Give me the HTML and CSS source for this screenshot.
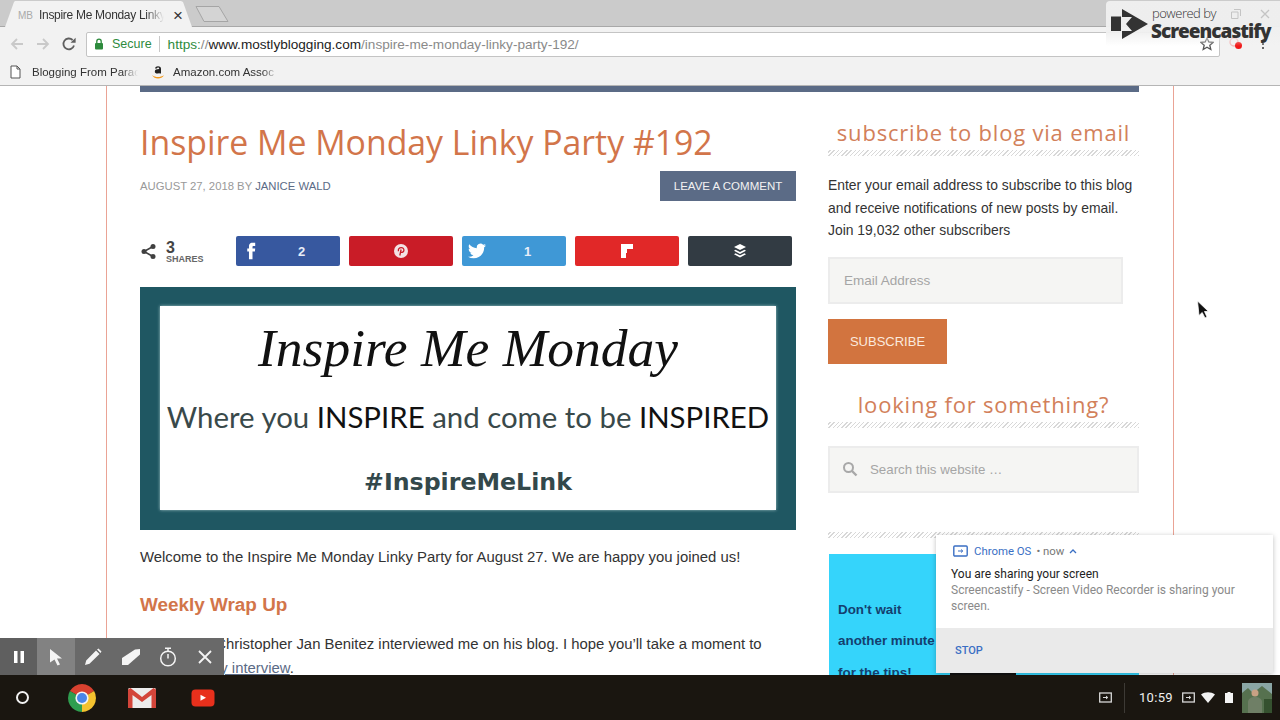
FILE: index.html
```html
<!DOCTYPE html>
<html lang="en">
<head>
    <meta charset="UTF-8">
    <title>Inspire Me Monday Linky Party #192</title>
    <link rel="stylesheet" href="styles.css">
</head>
<body>
    <div class="tabstrip">
        <div class="tab">
            <span class="favicon">MB</span>
            <span class="tabtitle">Inspire Me Monday Linky</span>
            <span class="tabclose">&#215;</span>
        </div>
        <svg class="newtab" width="34" height="18" viewBox="0 0 34 18"><path d="M1 1.5H24L33 16.5H9Z" fill="#d4d4d4" stroke="#a5a5a5"/></svg>
    </div>

    <div class="toolbar">
        <svg class="navicon" width="16" height="16" viewBox="0 0 16 16"><path d="M14 8H3M8 3L3 8l5 5" fill="none" stroke="#c9c9c9" stroke-width="1.8"/></svg>
        <svg class="navicon" width="16" height="16" viewBox="0 0 16 16"><path d="M2 8h11M8 3l5 5-5 5" fill="none" stroke="#c9c9c9" stroke-width="1.8"/></svg>
        <svg class="navicon" width="16" height="16" viewBox="0 0 16 16"><path d="M13 9.5A5.4 5.4 0 1 1 11.6 4" fill="none" stroke="#5f5f5f" stroke-width="1.8"/><path d="M9.5 6.8H14.6V1.7Z" fill="#5f5f5f"/></svg>
        <div class="omnibox">
            <svg width="10" height="12" viewBox="0 0 10 12"><rect x="1" y="5" width="8" height="6.5" rx="1" fill="#2e8b3d"/><path d="M2.8 5V3.4a2.2 2.2 0 0 1 4.4 0V5" fill="none" stroke="#2e8b3d" stroke-width="1.3"/></svg>
            <span class="secure">Secure</span>
            <span class="omnisep"></span>
            <span class="url"><span class="scheme">https:</span><span class="faint">//</span><span class="host">www.mostlyblogging.com</span><span class="faint">/inspire-me-monday-linky-party-192/</span></span>
            <svg class="star" width="14" height="14" viewBox="0 0 14 14"><path d="M7 1l1.8 4 4.2.4-3.2 2.8 1 4.3L7 10.2 3.2 12.5l1-4.3L1 5.4 5.2 5Z" fill="none" stroke="#555" stroke-width="1.3"/></svg>
        </div>
        <svg class="recdot" width="16" height="14" viewBox="0 0 16 14"><circle cx="6" cy="5" r="4" fill="none" stroke="#f3b7b7" stroke-width="1.5"/><circle cx="10.5" cy="8.5" r="3.5" fill="#f01818"/></svg>
        <span class="menudots"><i></i><i></i><i></i></span>
    </div>

    <div class="bookmarks">
        <span class="bookmark">
            <svg width="11" height="14" viewBox="0 0 11 14"><path d="M1 1h6l3 3v9H1Z" fill="#fff" stroke="#555"/><path d="M7 1v3h3" fill="none" stroke="#555"/></svg>
            <span class="bmtext">Blogging From Parac</span>
        </span>
        <span class="bookmark">
            <svg width="14" height="16" viewBox="0 0 14 16"><path d="M4 4.5c.3-1.500 1.500-2.200 3-2.200 2 0 3 .9 3 2.500v4.700H8.300V8.700c-.5.500-1.200.9-2 .9-1.500 0-2.500-.8-2.500-2.200 0-1.800 1.700-2.500 4.400-2.500 0-1-.4-1.400-1.200-1.400-.6 0-1 .3-1.200.9Z" fill="#222"/><path d="M1 11c3.500 2.700 8 2.700 12 .3-2.500 4.200-9.500 4.400-12-.3Z" fill="#f39a1d"/></svg>
            <span class="bmtext short">Amazon.com Assoc</span>
        </span>
    </div>

    <div class="page">
        <div class="wrap">
            <div class="topbar"></div>
            <div class="columns">
                <div class="main">
                    <h1>Inspire Me Monday Linky Party #192</h1>
                    <div class="meta">
                        <span class="byline">AUGUST 27, 2018 BY <a>JANICE WALD</a></span>
                        <span class="commentbtn">LEAVE A COMMENT</span>
                    </div>
                    <div class="shares">
                        <div class="sharecount">
                            <svg width="17" height="17" viewBox="0 0 17 17"><path d="M13 3.5L4 8.5l9 5" fill="none" stroke="#404040" stroke-width="1.6"/><circle cx="13" cy="3.5" r="2.5" fill="#404040"/><circle cx="4" cy="8.5" r="2.5" fill="#404040"/><circle cx="13" cy="13.5" r="2.5" fill="#404040"/></svg>
                            <div class="countbox"><b>3</b><span>SHARES</span></div>
                        </div>
                        <div class="sharebtn fb">
                            <svg width="18" height="18" viewBox="0 0 24 24"><path d="M14 8.5V6.300c0-.9.600-1.100 1-1.100h2.600V1H14C10.200 1 9.300 3.900 9.300 5.700v2.800H7v4.300h2.300V23H14V12.800h3.200l.4-4.300z" fill="#fff"/></svg>
                            <b>2</b>
                        </div>
                        <div class="sharebtn pin center">
                            <svg width="14" height="14" viewBox="0 0 14 14"><circle cx="7" cy="7" r="7" fill="#f3e3e4"/><path d="M5.800 11.500l1.300-6M4.500 7.300C3.800 5.200 5.300 3.600 7.200 3.600c1.800 0 2.900 1.100 2.700 2.800-.2 1.700-2 2.600-3.200 1.500" fill="none" stroke="#c91c27" stroke-width="1.3"/></svg>
                        </div>
                        <div class="sharebtn tw">
                            <svg width="18" height="18" viewBox="0 0 24 24"><path d="M23.950 4.570a10 10 0 0 1-2.820.77 4.960 4.960 0 0 0 2.160-2.720c-.95.550-2 .95-3.120 1.180a4.920 4.920 0 0 0-8.380 4.480C7.690 8.100 4.070 6.130 1.640 3.160a4.820 4.820 0 0 0-.67 2.480c0 1.710.87 3.210 2.190 4.100a4.900 4.900 0 0 1-2.230-.62v.06a4.920 4.920 0 0 0 3.950 4.830 5 5 0 0 1-2.210.08 4.940 4.940 0 0 0 4.600 3.420A9.870 9.870 0 0 1 0 19.540a14 14 0 0 0 7.560 2.210c9.050 0 14-7.500 14-13.980 0-.21 0-.42-.02-.63a9.940 9.940 0 0 0 2.460-2.550z" fill="#fff"/></svg>
                            <b>1</b>
                        </div>
                        <div class="sharebtn flip center">
                            <svg width="12" height="14" viewBox="0 0 12 14"><path d="M0 0H12V5H6V9H0Z M0 9H5V14H0Z" fill="#fff"/></svg>
                        </div>
                        <div class="sharebtn buf center">
                            <svg width="14" height="14" viewBox="0 0 14 14"><path d="M7 0l6 3-6 3-6-3Z" fill="#fff"/><path d="M2.500 5.700L7 8l4.500-2.300L13 6.800 7 10 1 6.800Z" fill="#fff"/><path d="M2.500 9.200L7 11.400l4.500-2.200L13 10.300 7 13.500 1 10.300Z" fill="#fff"/></svg>
                        </div>
                    </div>
                    <div class="banner">
                        <div class="bannerinner">
                            <div class="bannerscript">Inspire Me Monday</div>
                            <div class="bannerhand">Where you <b>INSPIRE</b> and come to be <b>INSPIRED</b></div>
                            <div class="bannertag">#InspireMeLink</div>
                        </div>
                    </div>
                    <p class="welcome">Welcome to the Inspire Me Monday Linky Party for August 27. We are happy you joined us!</p>
                    <h3>Weekly Wrap Up</h3>
                    <p class="entry">Last week, Christopher Jan Benitez interviewed me on his blog. I hope you&#8217;ll take a moment to check out <a>my interview</a>.</p>
                </div>

                <div class="sidebar">
                    <h4 class="widgettitle first">subscribe to blog via email</h4>
                    <p class="subtext">Enter your email address to subscribe to this blog and receive notifications of new posts by email.<br>Join 19,032 other subscribers</p>
                    <div class="field email">Email Address</div>
                    <div class="subscribe">SUBSCRIBE</div>
                    <h4 class="widgettitle">looking for something?</h4>
                    <div class="field search">
                        <svg width="16" height="16" viewBox="0 0 16 16"><circle cx="6.5" cy="6.5" r="4.5" fill="none" stroke="#a8a8a8" stroke-width="2"/><path d="M10 10l4.500 4.500" stroke="#a8a8a8" stroke-width="2.4"/></svg>
                        <span>Search this website &#8230;</span>
                    </div>
                    <div class="hatch lone"></div>
                    <div class="ad">
                        <p>Don't wait</p>
                        <p>another minute</p>
                        <p>for the tips!</p>
                        <span class="adblob"></span>
                    </div>
                </div>
            </div>
        </div>
    </div>

    <div class="shelf">
        <span class="launcher"></span>
        <svg class="app" width="30" height="30" viewBox="-15 -15 30 30"><path d="M0 0L-12.100-7A14 14 0 0 1 12.100-7Z" fill="#d8412f"/><path d="M0 0L12.100-7A14 14 0 0 1 0 14Z" fill="#f4c22f"/><path d="M0 0L0 14A14 14 0 0 1-12.100-7Z" fill="#2f9e4f"/><circle r="6.600" fill="#f4f4f4"/><circle r="5" fill="#4a86e8"/></svg>
        <svg class="app mail" width="30" height="22" viewBox="0 0 30 22"><rect x="1" y="1" width="28" height="20" rx="1.500" fill="#ececec"/><path d="M1 2.500V21H5.500V8L15 15 24.500 8V21H29V2.500L26.500 1 15 10 3.500 1Z" fill="#d3453a"/></svg>
        <svg class="app" width="24" height="18" viewBox="0 0 24 18"><rect width="23" height="17" x=".5" y=".5" rx="4" fill="#e8301c"/><path d="M9.500 5.700L15 8.800l-5.500 3Z" fill="#fff"/></svg>
        <div class="tray">
            <svg class="traycast" width="13" height="11" viewBox="0 0 13 11"><rect x=".7" y="1" width="11.600" height="9" fill="none" stroke="#d8d8d8" stroke-width="1.3"/><path d="M4 5.500h4.500M7 4l1.800 1.500L7 7" fill="none" stroke="#d8d8d8"/></svg>
            <span class="traysep"></span>
            <span class="clock">10:59</span>
            <svg class="traycast2" width="13" height="11" viewBox="0 0 13 11"><rect x=".7" y="1" width="11.600" height="9" fill="none" stroke="#d8d8d8" stroke-width="1.3"/><path d="M4 5.500h4.500M7 4l1.800 1.500L7 7" fill="none" stroke="#d8d8d8"/></svg>
            <svg class="traywifi" width="14" height="11" viewBox="0 0 14 11"><path d="M0 2.500C4 -.5 10 -.5 14 2.500L7 11Z" fill="#f2f2f2"/></svg>
            <svg class="traybatt" width="8" height="11" viewBox="0 0 8 11"><path d="M2.500 0h3v1H8v10H0V1h2.500Z" fill="#f4f4f4"/></svg>
            <svg class="avatar" width="30" height="30" viewBox="0 0 30 30"><rect width="30" height="30" fill="#5f7d5c"/><rect width="30" height="12" fill="#8aa6a4"/><path d="M0 10l6-5 5 5 9-7 10 8v19H0Z" fill="#56714f"/><circle cx="13" cy="10" r="3.500" fill="#c9a184"/><path d="M6 30V19c0-3 3-5 7-5s7 2 7 5v11Z" fill="#6f7f66"/><rect x="22" y="16" width="8" height="14" fill="#35512f"/></svg>
        </div>
    </div>

    <div class="recbar">
        <span class="recbtn dark"><svg width="12" height="14" viewBox="0 0 12 14"><path d="M1 1h3.500v12H1ZM7.500 1H11v12H7.500Z" fill="#fff"/></svg></span>
        <span class="recbtn active"><svg width="14" height="18" viewBox="0 0 14 18"><path d="M1 1l12 9.500H8l3 6-2.500 1-3-6L1 14.500Z" fill="#f4f4f4"/></svg></span>
        <span class="recbtn"><svg width="18" height="18" viewBox="0 0 18 18"><path d="M1 17l1.200-4.500L12 2.500 15.500 6 5.500 15.800Z M13 1.500l1.500-1L17.500 3.500 16.500 5Z" fill="#f4f4f4"/></svg></span>
        <span class="recbtn"><svg width="20" height="18" viewBox="0 0 20 18"><path d="M1 10L14 1.500 19 1V6.500L7 17H1Z" fill="#f4f4f4"/></svg></span>
        <span class="recbtn"><svg width="18" height="20" viewBox="0 0 18 20"><circle cx="9" cy="11.500" r="7.300" fill="none" stroke="#f4f4f4" stroke-width="1.5"/><path d="M6 1.200h6M9 1.500v3M9 7v4.500" stroke="#f4f4f4" stroke-width="1.5" fill="none"/></svg></span>
        <span class="recbtn"><svg width="14" height="14" viewBox="0 0 14 14"><path d="M1 1l12 12M13 1L1 13" stroke="#f4f4f4" stroke-width="1.8"/></svg></span>
    </div>

    <div class="notice">
        <div class="noticebody">
            <div class="noticehead">
                <svg width="15" height="12" viewBox="0 0 15 12"><rect x=".8" y="1" width="13.400" height="10" rx="1" fill="none" stroke="#3a6fc4" stroke-width="1.4"/><path d="M5 6h4.500M8 4.500L9.800 6 8 7.500" fill="none" stroke="#3a6fc4"/></svg>
                <span class="noticeapp">Chrome OS</span>
                <span class="noticetime">&#8226; now</span>
                <svg width="8" height="5" viewBox="0 0 8 5"><path d="M1 4l3-3 3 3" fill="none" stroke="#3a6fc4" stroke-width="1.3"/></svg>
            </div>
            <div class="noticetitle">You are sharing your screen</div>
            <div class="noticetext">Screencastify - Screen Video Recorder is sharing your screen.</div>
        </div>
        <div class="noticefoot">STOP</div>
    </div>

    <div class="watermark">
        <svg width="40" height="32" viewBox="0 0 40 32"><path d="M1 8.500H11V23H1ZM12 1L38 16 12 31V23H22L16 16 22 9H12Z" fill="#333"/></svg>
        <div class="wmtext">
            <span class="wmsmall">powered by</span>
            <span class="wmbig">Screencastify</span>
        </div>
        <div class="wmctrl">
            <svg width="10" height="10" viewBox="0 0 10 10"><path d="M3 .5h6.500V7M.5 3h6.500v6.500H.5Z" fill="none" stroke="#c4c4c4"/></svg>
            <svg width="10" height="10" viewBox="0 0 10 10"><path d="M1 1l8 8M9 1L1 9" stroke="#c4c4c4" stroke-width="1.3"/></svg>
        </div>
    </div>

    <svg class="pointer" width="14" height="20" viewBox="0 0 14 20"><path d="M1.500 1L12.500 11.500H8.500L11 17 9 18 6.200 12.500 3 15.500 1.500 1Z" fill="#111" stroke="#fff" stroke-width=".8"/></svg>
</body>
</html>
```
FILE: styles.css
```css
* {
    box-sizing: border-box;
}
body {
    margin: 0;
    width: 1280px;
    height: 720px;
    overflow: hidden;
    position: relative;
    display: flex;
    flex-direction: column;
    font-family: "Liberation Sans", Arial, sans-serif;
    color: #333;
    background: #fff;
}
p, h1, h3, h4 {
    margin: 0;
}

/* browser chrome */
.tabstrip {
    height: 27px;
    background: #cbcbcb;
    border-bottom: 1px solid #a8a8a8;
    display: flex;
    align-items: flex-end;
    padding-left: 5px;
    flex: none;
}
.tab {
    width: 187px;
    height: 26px;
    background: #f2f2f2;
    clip-path: polygon(0 100%, 9px 1px, 10px 0, 176px 0, 178px 1px, 187px 100%);
    display: flex;
    align-items: center;
    padding: 2px 0 0 13px;
    font-size: 12px;
    color: #333;
    margin-bottom: -1px;
}
.favicon {
    font-size: 10px;
    color: #aaa;
    width: 21px;
    flex: none;
}
.tabtitle {
    width: 125px;
    overflow: hidden;
    white-space: nowrap;
    flex: none;
    font-size: 12px;
    letter-spacing: -.3px;
    -webkit-mask-image: linear-gradient(to right, #000 85%, transparent);
    mask-image: linear-gradient(to right, #000 85%, transparent);
}
.tabclose {
    margin-left: 9px;
    font-size: 17px;
    color: #333;
    line-height: 1;
}
.newtab {
    margin: 0 0 3px 3px;
}
.toolbar {
    height: 32px;
    background: #f2f2f2;
    display: flex;
    align-items: center;
    padding: 2px 0 0 9px;
    flex: none;
}
.navicon {
    margin-right: 10px;
}
.navicon + .navicon + .navicon {
    margin-right: 9px;
}
.omnibox {
    width: 1134px;
    height: 25px;
    background: #fff;
    border: 1px solid #c4c4c4;
    border-radius: 2px;
    display: flex;
    align-items: center;
    padding-left: 7px;
    font-size: 13px;
}
.secure {
    color: #2e8b3d;
    margin-left: 8px;
    font-size: 12.5px;
}
.omnisep {
    width: 1px;
    height: 16px;
    background: #c8c8c8;
    margin: 0 8px 0 7px;
}
.url {
    font-size: 13.6px;
}
.scheme {
    color: #2e8b3d;
}
.faint {
    color: #8a8a8a;
}
.host {
    color: #222;
}
.star {
    margin-left: auto;
    margin-right: 5px;
}
.recdot {
    margin-left: 8px;
}
.menudots {
    margin-left: 18px;
    display: flex;
    flex-direction: column;
    gap: 2px;
}
.menudots i {
    width: 2px;
    height: 2px;
    background: #666;
}
.bookmarks {
    height: 27px;
    background: #f2f2f2;
    border-bottom: 1px solid #b5b5b5;
    display: flex;
    align-items: center;
    padding-left: 10px;
    gap: 13px;
    flex: none;
    font-size: 11.5px;
    color: #333;
}
.bookmark {
    display: flex;
    align-items: center;
    gap: 11px;
}
.bmtext {
    width: 106px;
    white-space: nowrap;
    overflow: hidden;
    -webkit-mask-image: linear-gradient(to right, #000 85%, transparent);
    mask-image: linear-gradient(to right, #000 85%, transparent);
}
.bmtext.short {
    width: 105px;
}
.bookmark + .bookmark {
    gap: 8px;
}

/* the blog page */
.page {
    flex: 1;
    overflow: hidden;
    min-height: 0;
}
.wrap {
    margin-left: 106px;
    width: 1068px;
    height: 100%;
    border-left: 1px solid #eaa395;
    border-right: 1px solid #eaa395;
    padding: 0 34px 0 33px;
}
.topbar {
    height: 6px;
    background: #5b6b86;
}
.columns {
    display: flex;
    gap: 32px;
}
.main {
    width: 656px;
    flex: none;
    padding-top: 27px;
}
h1 {
    font-family: "Open Sans", sans-serif;
    font-weight: 400;
    font-size: 33.8px;
    line-height: 46px;
    color: #d2754a;
}
.meta {
    display: flex;
    justify-content: space-between;
    align-items: center;
    margin-top: 6px;
    font-size: 11.3px;
    color: #999;
}
.byline a {
    color: #5b6b86;
}
.commentbtn {
    background: #5b6b86;
    color: #f2f2f2;
    width: 136px;
    height: 30px;
    font-size: 11.5px;
    display: flex;
    align-items: center;
    justify-content: center;
}
.shares {
    display: grid;
    grid-template-columns: 87px repeat(5, 104px);
    column-gap: 9px;
    margin-top: 35px;
    width: 652px;
    height: 30px;
}
.sharecount {
    display: flex;
    align-items: center;
    gap: 9px;
    color: #444;
}
.countbox {
    display: flex;
    flex-direction: column;
    margin-top: 3px;
}
.countbox b {
    font-size: 16px;
    line-height: 13px;
    color: #444;
}
.countbox span {
    font-size: 9px;
    line-height: 11px;
    font-weight: 700;
    color: #666;
}
.sharebtn {
    border-radius: 2px;
    display: flex;
    align-items: center;
    padding-left: 6px;
    color: #e8eef8;
    font-size: 13px;
}
.sharebtn b {
    margin-left: 38px;
}
.sharebtn.center {
    padding-left: 0;
    justify-content: center;
}
.fb {
    background: #37589f;
}
.pin {
    background: #c91c27;
}
.tw {
    background: #3f98d6;
}
.flip {
    background: #e12828;
}
.buf {
    background: #323b43;
}
.banner {
    margin-top: 21px;
    height: 243px;
    background: #1f5762;
    padding: 19px 20px 20px;
}
.bannerinner {
    height: 100%;
    background: #fff;
    box-shadow: 0 0 3px 0 #9fc0c5;
    display: flex;
    flex-direction: column;
    align-items: center;
    color: #111;
}
.bannerscript {
    font-family: "Liberation Serif", serif;
    font-style: italic;
    font-size: 53.5px;
    line-height: 62px;
    margin-top: 11px;
}
.bannerhand {
    font-family: "Lato", sans-serif;
    font-size: 29.4px;
    line-height: 38px;
    color: #39494a;
    margin-top: 19px;
    white-space: nowrap;
}
.bannerhand b {
    font-weight: 400;
    color: #111;
}
.bannertag {
    font-family: "DejaVu Sans", sans-serif;
    font-weight: 700;
    font-size: 23.7px;
    line-height: 30px;
    color: #33484b;
    margin-top: 31px;
}
.welcome {
    margin-top: 17px;
    font-size: 14.9px;
    line-height: 20px;
}
h3 {
    margin-top: 26px;
    font-size: 18.9px;
    line-height: 24px;
    color: #d2754a;
}
.entry {
    margin-top: 15px;
    font-size: 14.9px;
    line-height: 24px;
}
.entry a {
    color: #5b6b86;
    text-decoration: underline;
}

/* sidebar */
.sidebar {
    width: 311px;
    flex: none;
    padding-top: 22px;
    position: relative;
}
.widgettitle {
    font-family: "Open Sans", sans-serif;
    font-weight: 400;
    font-size: 22px;
    line-height: 36px;
    letter-spacing: .8px;
    color: #d2805a;
    text-align: center;
    padding-bottom: 6px;
    margin-top: 22px;
    background: repeating-linear-gradient(-45deg, #d8d8d8 0 1px, #fff 1px 3px) left bottom / 100% 6px no-repeat;
}
.widgettitle.first {
    margin-top: 0;
}
.hatch {
    height: 6px;
    background: repeating-linear-gradient(-45deg, #d8d8d8 0 1px, #fff 1px 3px);
}
.hatch.lone {
    margin-top: 39px;
}
.subtext {
    margin-top: 18px;
    font-size: 13.9px;
    line-height: 22.5px;
}
.field {
    background: #f5f5f3;
    border: 2px solid #ececec;
    color: #a5a5a5;
    font-size: 13.5px;
    display: flex;
    align-items: center;
}
.field.email {
    width: 295px;
    height: 47px;
    margin-top: 15px;
    padding-left: 14px;
}
.subscribe {
    width: 119px;
    height: 45px;
    margin-top: 15px;
    background: #d2743f;
    color: #fbe9dd;
    font-size: 13px;
    display: flex;
    align-items: center;
    justify-content: center;
}
.field.search {
    height: 47px;
    margin-top: 18px;
    padding-left: 12px;
    gap: 12px;
    font-size: 13.3px;
}
.ad {
    margin: 16px 0 0 1px;
    height: 130px;
    background: #35d4fb;
    padding: 46px 0 0 9px;
    position: relative;
    font-size: 13.4px;
    font-weight: 700;
    color: #143f6f;
}
.ad p {
    line-height: 20px;
    margin-bottom: 11.7px;
    white-space: nowrap;
}
.adblob {
    position: absolute;
    left: 121px;
    top: 118px;
    width: 66px;
    height: 6px;
    background: #111;
}

/* chromeos shelf */
.shelf {
    height: 45px;
    flex: none;
    background: #1a1610;
    display: flex;
    align-items: center;
    padding-left: 16px;
}
.launcher {
    width: 13px;
    height: 13px;
    border: 2px solid #f2f2f2;
    border-radius: 50%;
    margin-right: 38px;
}
.app {
    margin-right: 30px;
}
.app.mail {
    margin-right: 34px;
}
.tray {
    margin-left: auto;
    display: flex;
    align-items: center;
    margin-right: 8px;
    color: #eee;
}
.traysep {
    width: 1px;
    height: 30px;
    background: #3d3a35;
    margin: 0 14px 0 12px;
}
.clock {
    font-family: "Roboto", sans-serif;
    font-size: 13px;
    letter-spacing: .3px;
    width: 33px;
    white-space: nowrap;
}
.traycast2 {
    margin-left: 10px;
}
.traywifi {
    margin-left: 6px;
}
.traybatt {
    margin-left: 10px;
}
.avatar {
    margin-left: 9px;
}

/* things lying over the page */
.recbar {
    position: absolute;
    left: 0;
    top: 638px;
    width: 224px;
    height: 37px;
    background: #696969;
    display: flex;
}
.recbtn {
    width: 37.5px;
    display: flex;
    align-items: center;
    justify-content: center;
}
.recbtn.dark {
    background: #5f5f5f;
}
.recbtn.active {
    background: #828282;
}
.notice {
    position: absolute;
    left: 936px;
    top: 535px;
    width: 337px;
    height: 138px;
    background: #fff;
    box-shadow: 0 1px 5px rgba(0, 0, 0, .25);
    font-family: "Roboto", sans-serif;
    font-size: 12px;
    display: flex;
    flex-direction: column;
}
.noticebody {
    flex: 1;
    padding: 9px 15px 0;
}
.noticehead {
    display: flex;
    align-items: center;
    gap: 5px;
    line-height: 14px;
    margin-left: 2px;
    font-size: 11.4px;
    color: #3a6fc4;
}
.noticeapp {
    margin-left: 1px;
}
.noticetime {
    color: #777;
}
.noticetitle {
    margin-top: 8px;
    line-height: 16px;
    color: #222;
}
.noticetext {
    line-height: 16px;
    color: #8a8a8a;
}
.noticefoot {
    height: 45px;
    background: #eaeaea;
    padding: 0 19px;
    display: flex;
    align-items: center;
    color: #3a6fc4;
    font-weight: 500;
    font-size: 11px;
}
.watermark {
    position: absolute;
    left: 1106px;
    top: 1px;
    width: 174px;
    height: 45px;
    border-radius: 4px 0 0 0;
    background: linear-gradient(rgba(240, 240, 240, .95) 70%, rgba(240, 240, 240, 0));
    display: flex;
    padding: 7px 0 0 4px;
}
.wmtext {
    display: flex;
    flex-direction: column;
    margin-left: 1px;
    font-family: "Open Sans", sans-serif;
    color: #333;
}
.wmsmall {
    font-size: 13px;
    line-height: 12px;
    letter-spacing: -.5px;
    font-weight: 300;
    margin-left: 1px;
    margin-top: -1px;
}
.wmbig {
    font-size: 19px;
    line-height: 24px;
    font-weight: 800;
    letter-spacing: -1px;
}
.wmctrl {
    position: absolute;
    right: 10px;
    top: 8px;
    display: flex;
    gap: 19px;
}
.pointer {
    position: absolute;
    left: 1196px;
    top: 300px;
}
```
